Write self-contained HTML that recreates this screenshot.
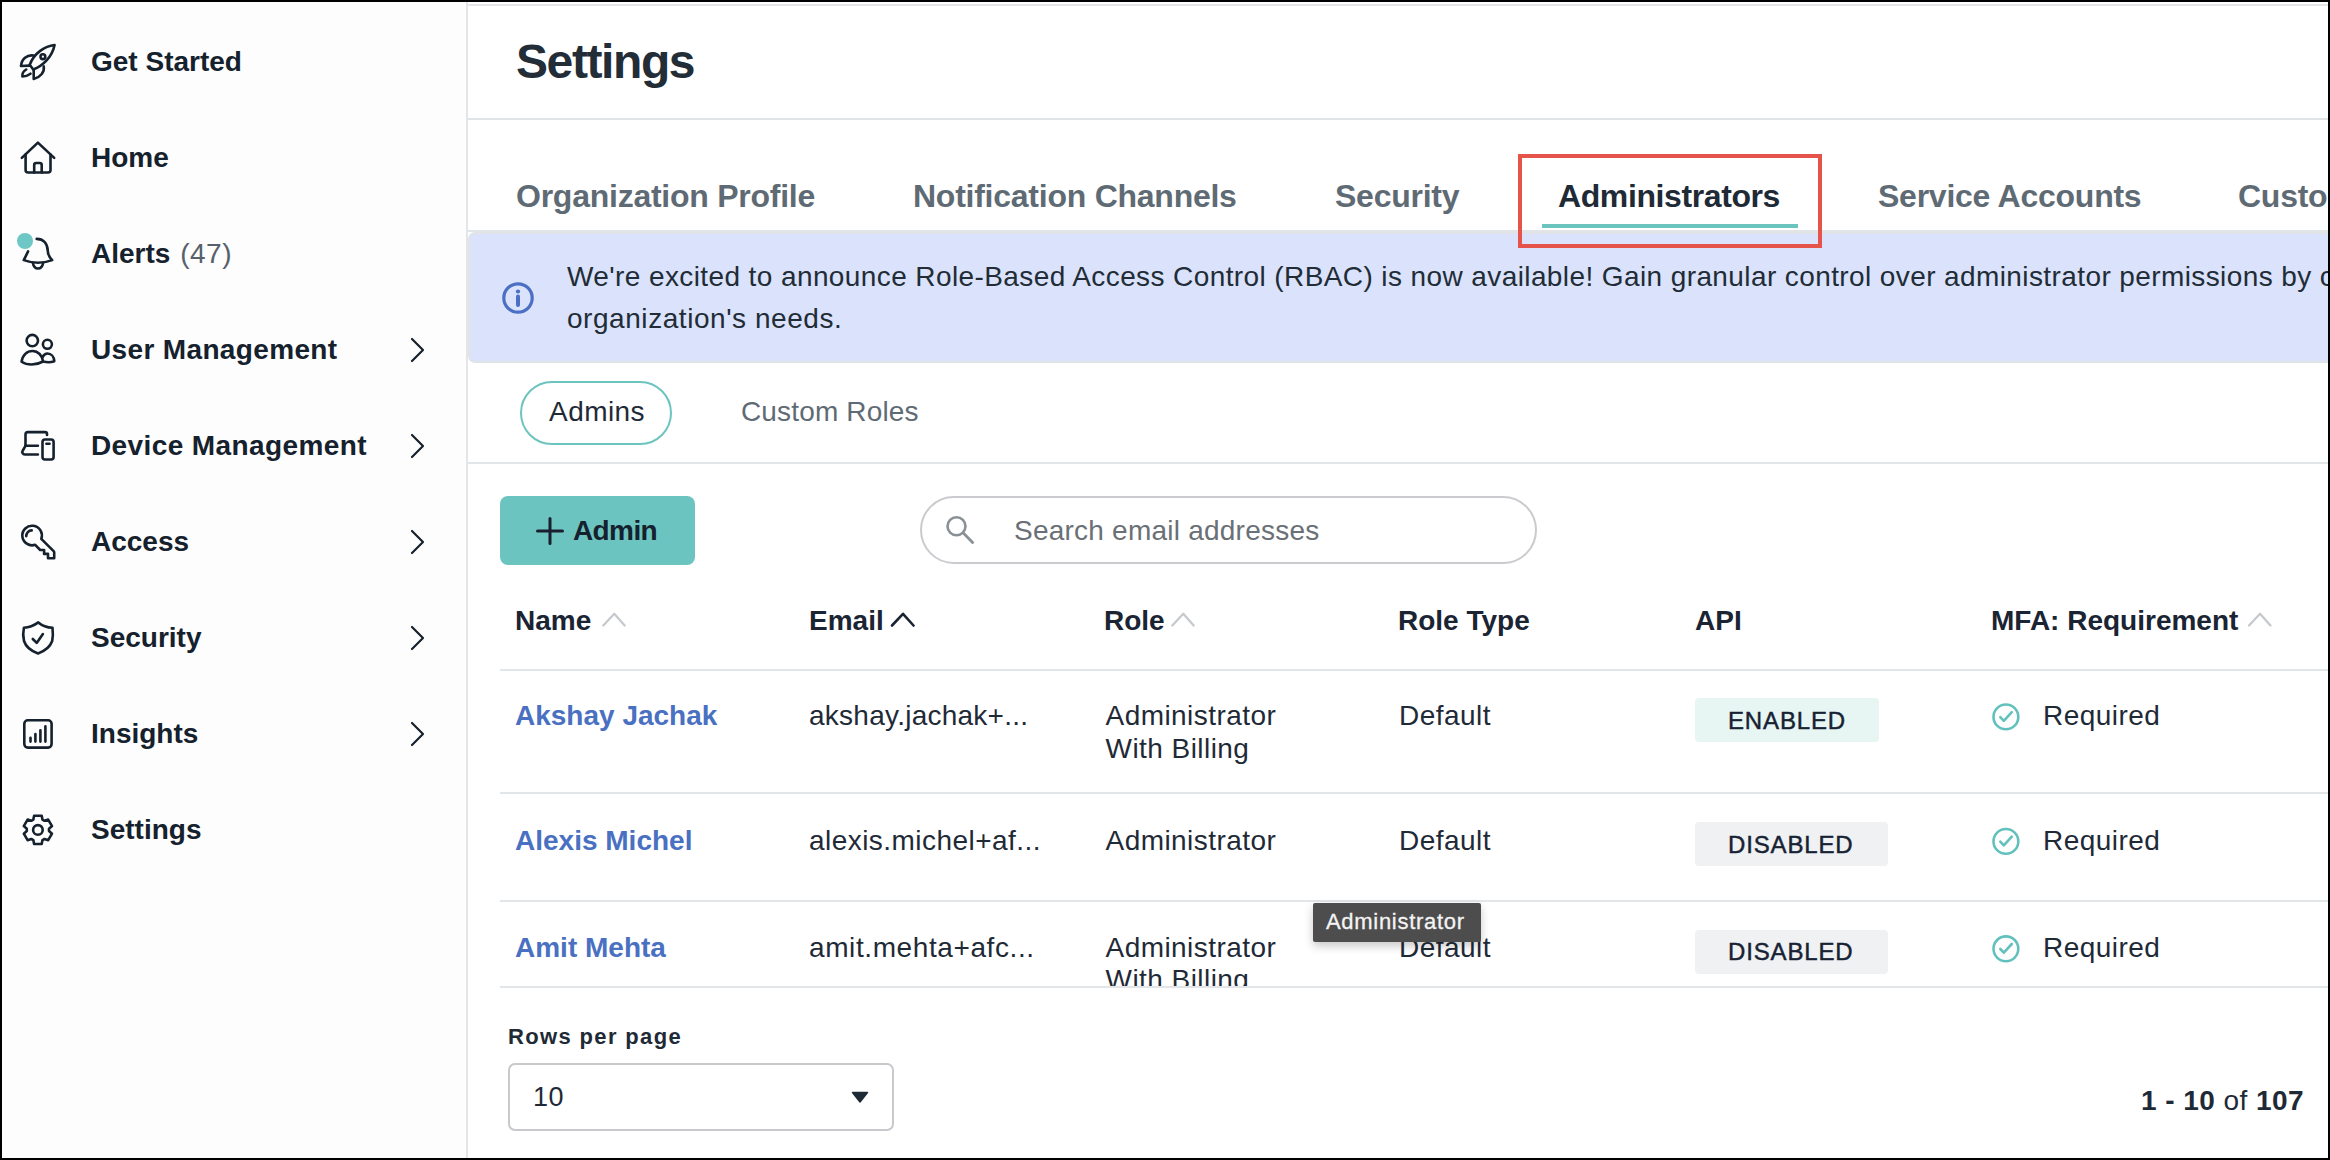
<!DOCTYPE html>
<html><head><meta charset="utf-8">
<style>
html,body{margin:0;padding:0;}
body{width:2330px;height:1160px;overflow:hidden;background:#000;position:relative;font-family:"Liberation Sans",sans-serif;}
#frame{position:absolute;left:0;top:0;width:2330px;height:1160px;overflow:hidden;background:#fff;}
.bd{position:absolute;background:#000;z-index:50;}
.abs{position:absolute;}
.t{position:absolute;white-space:nowrap;line-height:1;}
.b{font-weight:700;}
svg{position:absolute;overflow:visible;}
#side{position:absolute;left:0;top:0;width:466px;height:1160px;background:#fdfdfd;}
#sideline{position:absolute;left:466px;top:0;width:2px;height:1160px;background:#e4e5e7;}
.nav{font-size:28px;font-weight:700;color:#15212d;left:91px;}
.ico path,.ico circle,.ico rect{fill:none;stroke:#15212d;stroke-width:2.6;stroke-linecap:round;stroke-linejoin:round;}
.chev{fill:none;stroke:#15212d;stroke-width:2.2;stroke-linecap:round;stroke-linejoin:round;}
.tab{font-size:32px;font-weight:700;color:#5f6b74;letter-spacing:-0.25px;}
.cell{font-size:28px;color:#1f2a37;letter-spacing:0.45px;}
.hdr{font-size:28px;font-weight:700;color:#1a2433;}
.name{font-size:28px;font-weight:700;color:#4a70c2;}
.hline{position:absolute;left:500px;width:1828px;height:2px;background:#e3e6e8;}
.badge{position:absolute;left:1695px;height:44px;border-radius:4px;}
.btxt{font-size:24px;font-weight:400;color:#172233;letter-spacing:0.85px;-webkit-text-stroke:0.45px #172233;}
</style></head>
<body>
<div id="frame">
  <!-- SIDEBAR -->
  <div id="side"></div>
  <div id="sideline"></div>

  <!-- rocket -->
  <svg class="ico" style="left:15px;top:40px" width="45" height="45" viewBox="0 0 45 45">
    <path d="M39.6 5 C30 6 19 13 14.7 24.8 L18.2 29.5 C28 26 37 17 39.6 5 Z"/>
    <path d="M18.6 15.5 C12 14.5 6.5 19 6 26 L14.7 25.6"/>
    <path d="M28.7 26.4 C30 32 25 37.5 18.7 39 L18.7 29.6"/>
    <path d="M11.2 29.5 C8 31.5 7 34 7.4 36.5 C10 36.5 13 35.5 15.5 33.7"/>
    <circle cx="27.9" cy="16.7" r="2.4"/>
  </svg>
  <div class="t nav" style="top:48px">Get Started</div>

  <!-- home -->
  <svg class="ico" style="left:15px;top:136px" width="45" height="45" viewBox="0 0 45 45">
    <path d="M6.8 21.9 L22.9 6.6 L39.2 21.9"/>
    <path d="M10.6 18.5 V34 a2.5 2.5 0 0 0 2.5 2.5 H33 a2.5 2.5 0 0 0 2.5 -2.5 V18.5"/>
    <path d="M19.2 36.5 V29 a2 2 0 0 1 2 -2 h3.5 a2 2 0 0 1 2 2 V36.5"/>
  </svg>
  <div class="t nav" style="top:144px">Home</div>

  <!-- bell -->
  <svg class="ico" style="left:10px;top:226px" width="50" height="50" viewBox="0 0 50 50">
    <path d="M26.7 12.9 C33 12.9 37.5 17 37.8 25 C38 29 39.5 31.5 42.2 34.1 C33 37.5 23 37.5 13.8 34.1 L18.1 25.4"/>
    <path d="M22.9 37 C23.5 40.5 25.5 42.5 28 42.5 C30.5 42.5 32.5 40.5 33.1 37"/>
  </svg>
  <div class="abs" style="left:17px;top:233px;width:16px;height:16px;border-radius:50%;background:#6dc7c4"></div>
  <div class="t nav" style="top:240px">Alerts <span style="font-weight:400;color:#56616b;margin-left:2px;letter-spacing:0.5px">(47)</span></div>

  <!-- users -->
  <svg class="ico" style="left:15px;top:328px" width="45" height="45" viewBox="0 0 45 45">
    <circle cx="17.3" cy="12.6" r="5.7"/>
    <circle cx="32.4" cy="16.3" r="4.5"/>
    <path d="M6.6 33.7 C7.5 27 12 23 17.5 23 C23 23 27.5 27.5 28 33.5 C21 37.5 12 37.5 6.6 33.7 Z"/>
    <path d="M27.5 29 C29 26.5 30.5 25.5 32.5 25.5 C36 25.5 39 28.5 39.3 33.2 C36 34.5 32 34.5 28 33.5"/>
  </svg>
  <div class="t nav" style="top:336px;letter-spacing:0.35px">User Management</div>
  <svg class="chev" style="left:0;top:0" width="1" height="1"><path d="M412 339 L423 350 L412 361"/></svg>

  <!-- devices -->
  <svg class="ico" style="left:15px;top:424px" width="45" height="45" viewBox="0 0 45 45">
    <path d="M10.5 21.8 V10.5 a2.4 2.4 0 0 1 2.4 -2.4 H30 a2 2 0 0 1 2 2 V11"/>
    <path d="M10.5 21.8 H22.9"/>
    <path d="M10.5 21.8 L7.8 26.5 a2.5 2.5 0 0 0 2.2 4 H22.9"/>
    <rect x="27.5" y="15.5" width="11.1" height="20" rx="2.5"/>
    <path d="M31.4 19.8 H34.5"/>
  </svg>
  <div class="t nav" style="top:432px;letter-spacing:0.4px">Device Management</div>
  <svg class="chev" style="left:0;top:0" width="1" height="1"><path d="M412 435 L423 446 L412 457"/></svg>

  <!-- key -->
  <svg class="ico" style="left:15px;top:519px" width="45" height="45" viewBox="0 0 45 45">
    <path d="M20.2 25.8 A9.8 9.8 0 1 1 26.3 19.9 L38.6 32.2 a2 2 0 0 1 .6 1.4 V39.2 H33 V34.9 H29.1 V31 H25.2 Z"/>
    <path d="M11.3 17.1 A5.5 5.5 0 0 1 16.7 11.4"/>
  </svg>
  <div class="t nav" style="top:528px">Access</div>
  <svg class="chev" style="left:0;top:0" width="1" height="1"><path d="M412 531 L423 542 L412 553"/></svg>

  <!-- shield -->
  <svg class="ico" style="left:15px;top:615px" width="45" height="45" viewBox="0 0 45 45">
    <path d="M23.3 7.4 C19 10.5 14 12.5 8.9 12.8 C8 17 8 22 9 26 C11 32 16 36 23 38.4 C30 36 35 32 37.2 26 C38 22 38 17 37.5 12.8 C32 12.5 27 10.5 23.3 7.4 Z"/>
    <path d="M17.8 24 L21.7 27.9 L27.9 19"/>
  </svg>
  <div class="t nav" style="top:624px">Security</div>
  <svg class="chev" style="left:0;top:0" width="1" height="1"><path d="M412 627 L423 638 L412 649"/></svg>

  <!-- insights -->
  <svg class="ico" style="left:15px;top:711px" width="45" height="45" viewBox="0 0 45 45">
    <rect x="9.3" y="9.3" width="27.3" height="27.3" rx="3.5"/>
    <path d="M15.5 26.8 V30.6 M20.4 23 V30.6 M25.4 19.3 V30.6 M30.4 15.4 V30.6" style="stroke-width:2.6"/>
  </svg>
  <div class="t nav" style="top:720px">Insights</div>
  <svg class="chev" style="left:0;top:0" width="1" height="1"><path d="M412 723 L423 734 L412 745"/></svg>

  <!-- gear -->
  <svg class="ico" style="left:15px;top:807px" width="45" height="45" viewBox="0 0 45 45">
    <path d="M19.1 8.8 L26.7 8.8 L27.5 12.7 L29.5 13.8 L33.2 12.6 L37.0 19.1 L34.0 21.7 L34.0 24.1 L37.0 26.7 L33.2 33.2 L29.5 32.0 L27.5 33.1 L26.7 37.0 L19.1 37.0 L18.3 33.1 L16.3 32.0 L12.6 33.2 L8.8 26.7 L11.8 24.1 L11.8 21.7 L8.8 19.1 L12.6 12.6 L16.3 13.8 L18.3 12.7Z"/>
    <circle cx="22.9" cy="22.9" r="4.8"/>
  </svg>
  <div class="t nav" style="top:816px">Settings</div>

  <!-- MAIN -->
  <div class="abs" style="left:468px;top:4px;width:1862px;height:2px;background:#e4e6e9"></div>
  <div class="t b" style="left:516px;top:38px;font-size:48px;color:#222d38;letter-spacing:-1.4px">Settings</div>
  <div class="abs" style="left:468px;top:118px;width:1862px;height:2px;background:#e1e4e7"></div>

  <!-- tabs -->
  <div class="t tab" style="left:516px;top:180px">Organization Profile</div>
  <div class="t tab" style="left:913px;top:180px">Notification Channels</div>
  <div class="t tab" style="left:1335px;top:180px">Security</div>
  <div class="t tab" style="left:1558px;top:180px;color:#1f2a37;letter-spacing:-0.4px">Administrators</div>
  <div class="t tab" style="left:1878px;top:180px">Service Accounts</div>
  <div class="t tab" style="left:2238px;top:180px">Customization</div>
  <div class="abs" style="left:1542px;top:224px;width:256px;height:4px;background:#6cc4bf"></div>
  <div class="abs" style="left:468px;top:230px;width:1862px;height:2px;background:#e1e5e7"></div>

  <!-- banner -->
  <div class="abs" style="left:468px;top:232px;width:1900px;height:127px;background:#dae3fb;border:2px solid #e1e4e7;border-radius:7px"></div>
  <svg style="left:0;top:0" width="1" height="1">
    <circle cx="518" cy="298" r="14.2" fill="none" stroke="#4a6fc4" stroke-width="3.2"/>
    <circle cx="518" cy="291.5" r="2.1" fill="#4a6fc4"/>
    <path d="M518 296.5 V305" stroke="#4a6fc4" stroke-width="4" stroke-linecap="round"/>
  </svg>
  <div class="t cell" style="left:567px;top:263px;letter-spacing:0.4px;color:#222c37">We're excited to announce Role-Based Access Control (RBAC) is now available! Gain granular control over administrator permissions by customizing roles</div>
  <div class="t cell" style="left:567px;top:305px;letter-spacing:0.55px;color:#222c37">organization's needs.</div>

  <!-- red highlight -->
  <div class="abs" style="left:1518px;top:154px;width:296px;height:86px;border:4px solid #e5534b;z-index:20"></div>

  <!-- sub tabs -->
  <div class="abs" style="left:520px;top:381px;width:148px;height:60px;border:2px solid #6cc4bf;border-radius:32px"></div>
  <div class="t cell" style="left:549px;top:398px;color:#1f2a37">Admins</div>
  <div class="t cell" style="left:741px;top:398px;color:#5f6b74;letter-spacing:0.15px">Custom Roles</div>
  <div class="abs" style="left:468px;top:462px;width:1862px;height:2px;background:#e3e6e8"></div>

  <!-- add admin button -->
  <div class="abs" style="left:500px;top:496px;width:195px;height:69px;background:#6cc4c1;border-radius:8px"></div>
  <svg style="left:0;top:0" width="1" height="1"><path d="M550 518.5 V543.5 M537.5 531 H562.5" stroke="#1a1f30" stroke-width="3" stroke-linecap="round"/></svg>
  <div class="t b" style="left:573px;top:517px;font-size:28px;color:#15212d;letter-spacing:-0.6px">Admin</div>

  <!-- search -->
  <div class="abs" style="left:920px;top:496px;width:613px;height:64px;border:2px solid #c9cbce;border-radius:34px"></div>
  <svg style="left:936px;top:508px" width="50" height="50" viewBox="0 0 50 50">
    <circle cx="20.5" cy="18.3" r="9" fill="none" stroke="#899096" stroke-width="2.6"/>
    <path d="M27.3 25.1 L36.6 34.5" stroke="#899096" stroke-width="2.8" stroke-linecap="round"/>
  </svg>
  <div class="t cell" style="left:1014px;top:517px;color:#6a7076;letter-spacing:0.23px">Search email addresses</div>

  <!-- TABLE -->
  <div class="t hdr" style="left:515px;top:607px">Name</div>
  <div class="t hdr" style="left:809px;top:607px">Email</div>
  <div class="t hdr" style="left:1104px;top:607px">Role</div>
  <div class="t hdr" style="left:1398px;top:607px">Role Type</div>
  <div class="t hdr" style="left:1695px;top:607px">API</div>
  <div class="t hdr" style="left:1991px;top:607px">MFA: Requirement</div>
  <svg style="left:0;top:0" width="1" height="1" fill="none" stroke-width="2.3" stroke-linecap="round" stroke-linejoin="round">
    <path d="M603.3 625.5 L614.3 613.8 L624.7 625.5" stroke="#c6c9ce"/>
    <path d="M892 625.5 L903 613.8 L913.5 625.5" stroke="#1a2433" stroke-width="2.6"/>
    <path d="M1172.3 625.5 L1183.3 613.8 L1193.7 625.5" stroke="#c6c9ce"/>
    <path d="M2249 625.5 L2260 613.8 L2270.5 625.5" stroke="#c6c9ce"/>
  </svg>
  <div class="hline" style="top:669px"></div>

  <div class="abs" style="left:468px;top:671px;width:1862px;height:315px;overflow:hidden">
    <div style="position:absolute;left:-468px;top:-671px;width:2330px;height:1160px">
      <!-- row 1 -->
      <div class="t name" style="left:515px;top:702px">Akshay Jachak</div>
      <div class="t cell" style="left:809px;top:702px;letter-spacing:0.25px">akshay.jachak+...</div>
      <div class="t cell" style="left:1105.5px;top:702px">Administrator</div>
      <div class="t cell" style="left:1105.5px;top:735px">With Billing</div>
      <div class="t cell" style="left:1399px;top:702px">Default</div>
      <div class="badge" style="top:698px;width:184px;background:#e7f6f2"></div>
      <div class="t btxt" style="left:1728px;top:709px">ENABLED</div>
      <div class="t cell" style="left:2043px;top:702px">Required</div>
      <div class="hline" style="top:792px"></div>
      <!-- row 2 -->
      <div class="t name" style="left:515px;top:827px">Alexis Michel</div>
      <div class="t cell" style="left:809px;top:827px">alexis.michel+af...</div>
      <div class="t cell" style="left:1105.5px;top:827px">Administrator</div>
      <div class="t cell" style="left:1399px;top:827px">Default</div>
      <div class="badge" style="top:822px;width:193px;background:#eff1f3"></div>
      <div class="t btxt" style="left:1728px;top:833px">DISABLED</div>
      <div class="t cell" style="left:2043px;top:827px">Required</div>
      <div class="hline" style="top:900px"></div>
      <!-- row 3 -->
      <div class="t name" style="left:515px;top:934px">Amit Mehta</div>
      <div class="t cell" style="left:809px;top:934px;letter-spacing:0.6px">amit.mehta+afc...</div>
      <div class="t cell" style="left:1105.5px;top:934px">Administrator</div>
      <div class="t cell" style="left:1105.5px;top:966px">With Billing</div>
      <div class="t cell" style="left:1399px;top:934px">Default</div>
      <div class="badge" style="top:930px;width:193px;background:#eff1f3"></div>
      <div class="t btxt" style="left:1728px;top:940px">DISABLED</div>
      <div class="t cell" style="left:2043px;top:934px">Required</div>
      <svg style="left:0;top:0" width="1" height="1" fill="none" stroke="#62c1bd" stroke-width="2.6" stroke-linecap="round" stroke-linejoin="round">
        <circle cx="2005.9" cy="716.9" r="12.4"/><path d="M2000.3 717.1 L2003.8 720.8 L2011.8 712.1"/>
        <circle cx="2005.9" cy="841.4" r="12.4"/><path d="M2000.3 841.6 L2003.8 845.3 L2011.8 836.6"/>
        <circle cx="2005.9" cy="948.8" r="12.4"/><path d="M2000.3 949 L2003.8 952.7 L2011.8 944"/>
      </svg>
    </div>
  </div>
  <div class="hline" style="top:986px"></div>

  <!-- tooltip -->
  <div class="abs" style="left:1313px;top:903px;width:168px;height:39px;background:#4d4d4d;border-radius:2px;box-shadow:0 4px 10px rgba(0,0,0,0.22);z-index:10"></div>
  <div class="t" style="left:1326px;top:911px;font-size:22px;color:#f4f4f4;letter-spacing:0.7px;-webkit-text-stroke:0.3px #f4f4f4;z-index:11">Administrator</div>

  <!-- footer -->
  <div class="t b" style="left:508px;top:1026px;font-size:22px;color:#1f2a37;letter-spacing:1.35px">Rows per page</div>
  <div class="abs" style="left:508px;top:1063px;width:382px;height:64px;border:2px solid #c7c9cc;border-radius:7px"></div>
  <div class="t cell" style="left:533px;top:1084px;font-size:27px">10</div>
  <svg style="left:0;top:0" width="1" height="1"><path d="M852.5 1092.5 H867.5 L860 1102 Z" fill="#1f2a37" stroke="#1f2a37" stroke-width="1.5" stroke-linejoin="round"/></svg>
  <div class="t" style="right:26px;top:1087px;font-size:28px;color:#1f2a37;letter-spacing:0.45px"><b>1 - 10</b> of <b>107</b></div>


  <div class="bd" style="left:0;top:0;width:2330px;height:2px"></div>
  <div class="bd" style="left:0;bottom:0;width:2330px;height:2px"></div>
  <div class="bd" style="left:0;top:0;width:2px;height:1160px"></div>
  <div class="bd" style="right:0;top:0;width:2px;height:1160px"></div>
</div>
</body></html>
